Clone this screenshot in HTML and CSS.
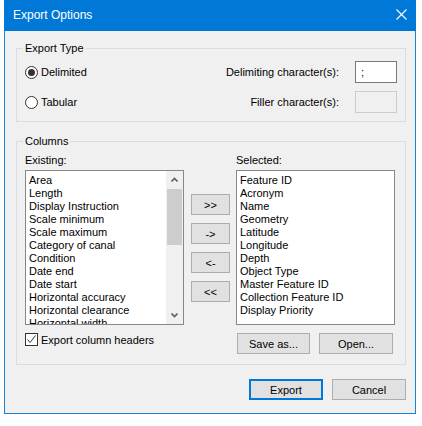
FILE: index.html
```html
<!DOCTYPE html>
<html lang="en">
<head>
    <meta charset="UTF-8">
    <title>Export Options</title>
    <link rel="stylesheet" href="styles.css">
</head>
<body>
    <div class="window">
        <div class="titlebar">
            <span class="title">Export Options</span>
            <svg class="close" width="11" height="11" viewBox="0 0 11 11">
                <path d="M0.5 0.5 L10.5 10.5 M10.5 0.5 L0.5 10.5" stroke="#fff" stroke-width="1.1" fill="none"/>
            </svg>
        </div>

        <div class="content">
            <fieldset class="group type-group">
                <legend>Export Type</legend>
                <div class="type-row">
                    <label class="radio"><span class="radio-circle checked"></span>Delimited</label>
                    <span class="field-label">Delimiting character(s):</span>
                    <div class="textbox">;</div>
                </div>
                <div class="type-row">
                    <label class="radio"><span class="radio-circle"></span>Tabular</label>
                    <span class="field-label">Filler character(s):</span>
                    <div class="textbox disabled"></div>
                </div>
            </fieldset>

            <fieldset class="group columns-group">
                <legend>Columns</legend>
                <div class="columns">
                    <div class="list-col">
                        <div class="list-label">Existing:</div>
                        <div class="listbox">
                            <ul class="items">
                                <li>Area</li>
                                <li>Length</li>
                                <li>Display Instruction</li>
                                <li>Scale minimum</li>
                                <li>Scale maximum</li>
                                <li>Category of canal</li>
                                <li>Condition</li>
                                <li>Date end</li>
                                <li>Date start</li>
                                <li>Horizontal accuracy</li>
                                <li>Horizontal clearance</li>
                                <li>Horizontal width</li>
                            </ul>
                            <div class="scrollbar">
                                <div class="arrow">
                                    <svg width="7" height="5" viewBox="0 0 7 5"><path d="M0.5 4.5 L3.5 1.5 L6.5 4.5" stroke="#606060" stroke-width="1.6" fill="none"/></svg>
                                </div>
                                <div class="track">
                                    <div class="thumb"></div>
                                </div>
                                <div class="arrow">
                                    <svg width="7" height="5" viewBox="0 0 7 5"><path d="M0.5 0.5 L3.5 3.5 L6.5 0.5" stroke="#606060" stroke-width="1.6" fill="none"/></svg>
                                </div>
                            </div>
                        </div>
                        <label class="checkbox-row">
                            <span class="checkbox">
                                <svg width="11" height="11" viewBox="0 0 11 11"><path d="M1.5 5.5 L4 8.5 L9.5 1.5" stroke="#333" stroke-width="1" fill="none"/></svg>
                            </span>
                            Export column headers
                        </label>
                    </div>

                    <div class="move-buttons">
                        <button class="btn">&gt;&gt;</button>
                        <button class="btn">-&gt;</button>
                        <button class="btn">&lt;-</button>
                        <button class="btn">&lt;&lt;</button>
                    </div>

                    <div class="list-col">
                        <div class="list-label">Selected:</div>
                        <div class="listbox">
                            <ul class="items">
                                <li>Feature ID</li>
                                <li>Acronym</li>
                                <li>Name</li>
                                <li>Geometry</li>
                                <li>Latitude</li>
                                <li>Longitude</li>
                                <li>Depth</li>
                                <li>Object Type</li>
                                <li>Master Feature ID</li>
                                <li>Collection Feature ID</li>
                                <li>Display Priority</li>
                            </ul>
                        </div>
                        <div class="file-buttons">
                            <button class="btn save-btn">Save as...</button>
                            <button class="btn open-btn">Open...</button>
                        </div>
                    </div>
                </div>
            </fieldset>

            <div class="dialog-buttons">
                <button class="btn dialog-btn default">Export</button>
                <button class="btn dialog-btn">Cancel</button>
            </div>
        </div>
    </div>
</body>
</html>
```

FILE: styles.css
```css
* {
    box-sizing: border-box;
}

body {
    margin: 0;
    background: #fff;
    font-family: "Liberation Sans", Arial, sans-serif;
    font-size: 11px;
    color: #000;
}

.window {
    margin-left: 4px;
    width: 412px;
    height: 414px;
    border: 1px solid #1883d7;
    border-top: none;
    background: #f0f0f0;
    display: flex;
    flex-direction: column;
}

.titlebar {
    height: 31px;
    background: #0078d7;
    display: flex;
    align-items: center;
    justify-content: space-between;
    padding: 0 9px 2px 8px;
    margin: 0 -1px;
}

.title {
    color: #fff;
    font-size: 12px;
    padding-left: 1px;
}

.close {
    display: block;
}

.content {
    padding: 10px 9px 0 11px;
}

.group {
    margin: 0;
    border: 1px solid #dcdcdc;
    padding: 5px 8px 8px 8px;
    min-width: 0;
}

.group legend {
    padding: 0 2px;
    margin-left: -2px;
    line-height: 15px;
}

.type-row {
    display: flex;
    align-items: center;
    height: 22px;
}

.type-row + .type-row {
    margin-top: 8px;
}

.radio {
    display: flex;
    align-items: center;
    gap: 3px;
}

.radio-circle {
    width: 13px;
    height: 13px;
    border: 1px solid #333;
    border-radius: 50%;
    background: #fff;
    display: flex;
    align-items: center;
    justify-content: center;
}

.radio-circle.checked::after {
    content: "";
    width: 7px;
    height: 7px;
    border-radius: 50%;
    background: #333;
}

.field-label {
    margin-left: auto;
    margin-right: 16px;
}

.textbox {
    width: 42px;
    height: 22px;
    border: 1px solid #7a7a7a;
    background: #fff;
    padding: 3px 5px;
    line-height: 14px;
}

.textbox.disabled {
    border-color: #cccccc;
    background: #f0f0f0;
}

.columns-group {
    margin-top: 12px;
    padding-top: 4px;
    padding-right: 10px;
    padding-bottom: 10px;
}

.columns {
    display: flex;
}

.list-col {
    width: 159px;
    display: flex;
    flex-direction: column;
}

.list-label {
    line-height: 15px;
    margin-bottom: 2px;
}

.listbox {
    height: 155px;
    border: 1px solid #828790;
    background: #fff;
    display: flex;
}

.items {
    flex: 1;
    list-style: none;
    margin: 0;
    padding: 3px 3px 0;
    overflow: hidden;
}

.items li {
    height: 13px;
    line-height: 13px;
    white-space: nowrap;
}

.scrollbar {
    width: 17px;
    background: #f0f0f0;
    display: flex;
    flex-direction: column;
}

.arrow {
    height: 17px;
    display: flex;
    align-items: center;
    justify-content: center;
}

.arrow svg {
    display: block;
}

.track {
    flex: 1;
    padding: 1px 1px 0;
}

.thumb {
    height: 56px;
    background: #cdcdcd;
}

.checkbox-row {
    display: flex;
    align-items: center;
    gap: 3px;
    margin-top: 7px;
    height: 15px;
}

.checkbox {
    width: 13px;
    height: 13px;
    border: 1px solid #333;
    background: #fff;
    display: flex;
    align-items: center;
    justify-content: center;
}

.checkbox svg {
    display: block;
}

.btn {
    height: 21px;
    margin: 0;
    padding: 0;
    background: #e1e1e1;
    border: 1px solid #adadad;
    font-family: "Liberation Sans", Arial, sans-serif;
    font-size: 11px;
    color: #000;
}

.move-buttons {
    width: 39px;
    margin: 0 6px 0 7px;
    padding-top: 41px;
    display: flex;
    flex-direction: column;
    gap: 8px;
}

.file-buttons {
    display: flex;
    gap: 9px;
    margin-top: 8px;
    padding-left: 1px;
}

.save-btn {
    width: 73px;
}

.open-btn {
    width: 74px;
}

.dialog-buttons {
    display: flex;
    justify-content: flex-end;
    gap: 9px;
    margin-top: 14px;
}

.dialog-btn {
    width: 74px;
}

.dialog-btn.default {
    border: 2px solid #0078d7;
}
```
